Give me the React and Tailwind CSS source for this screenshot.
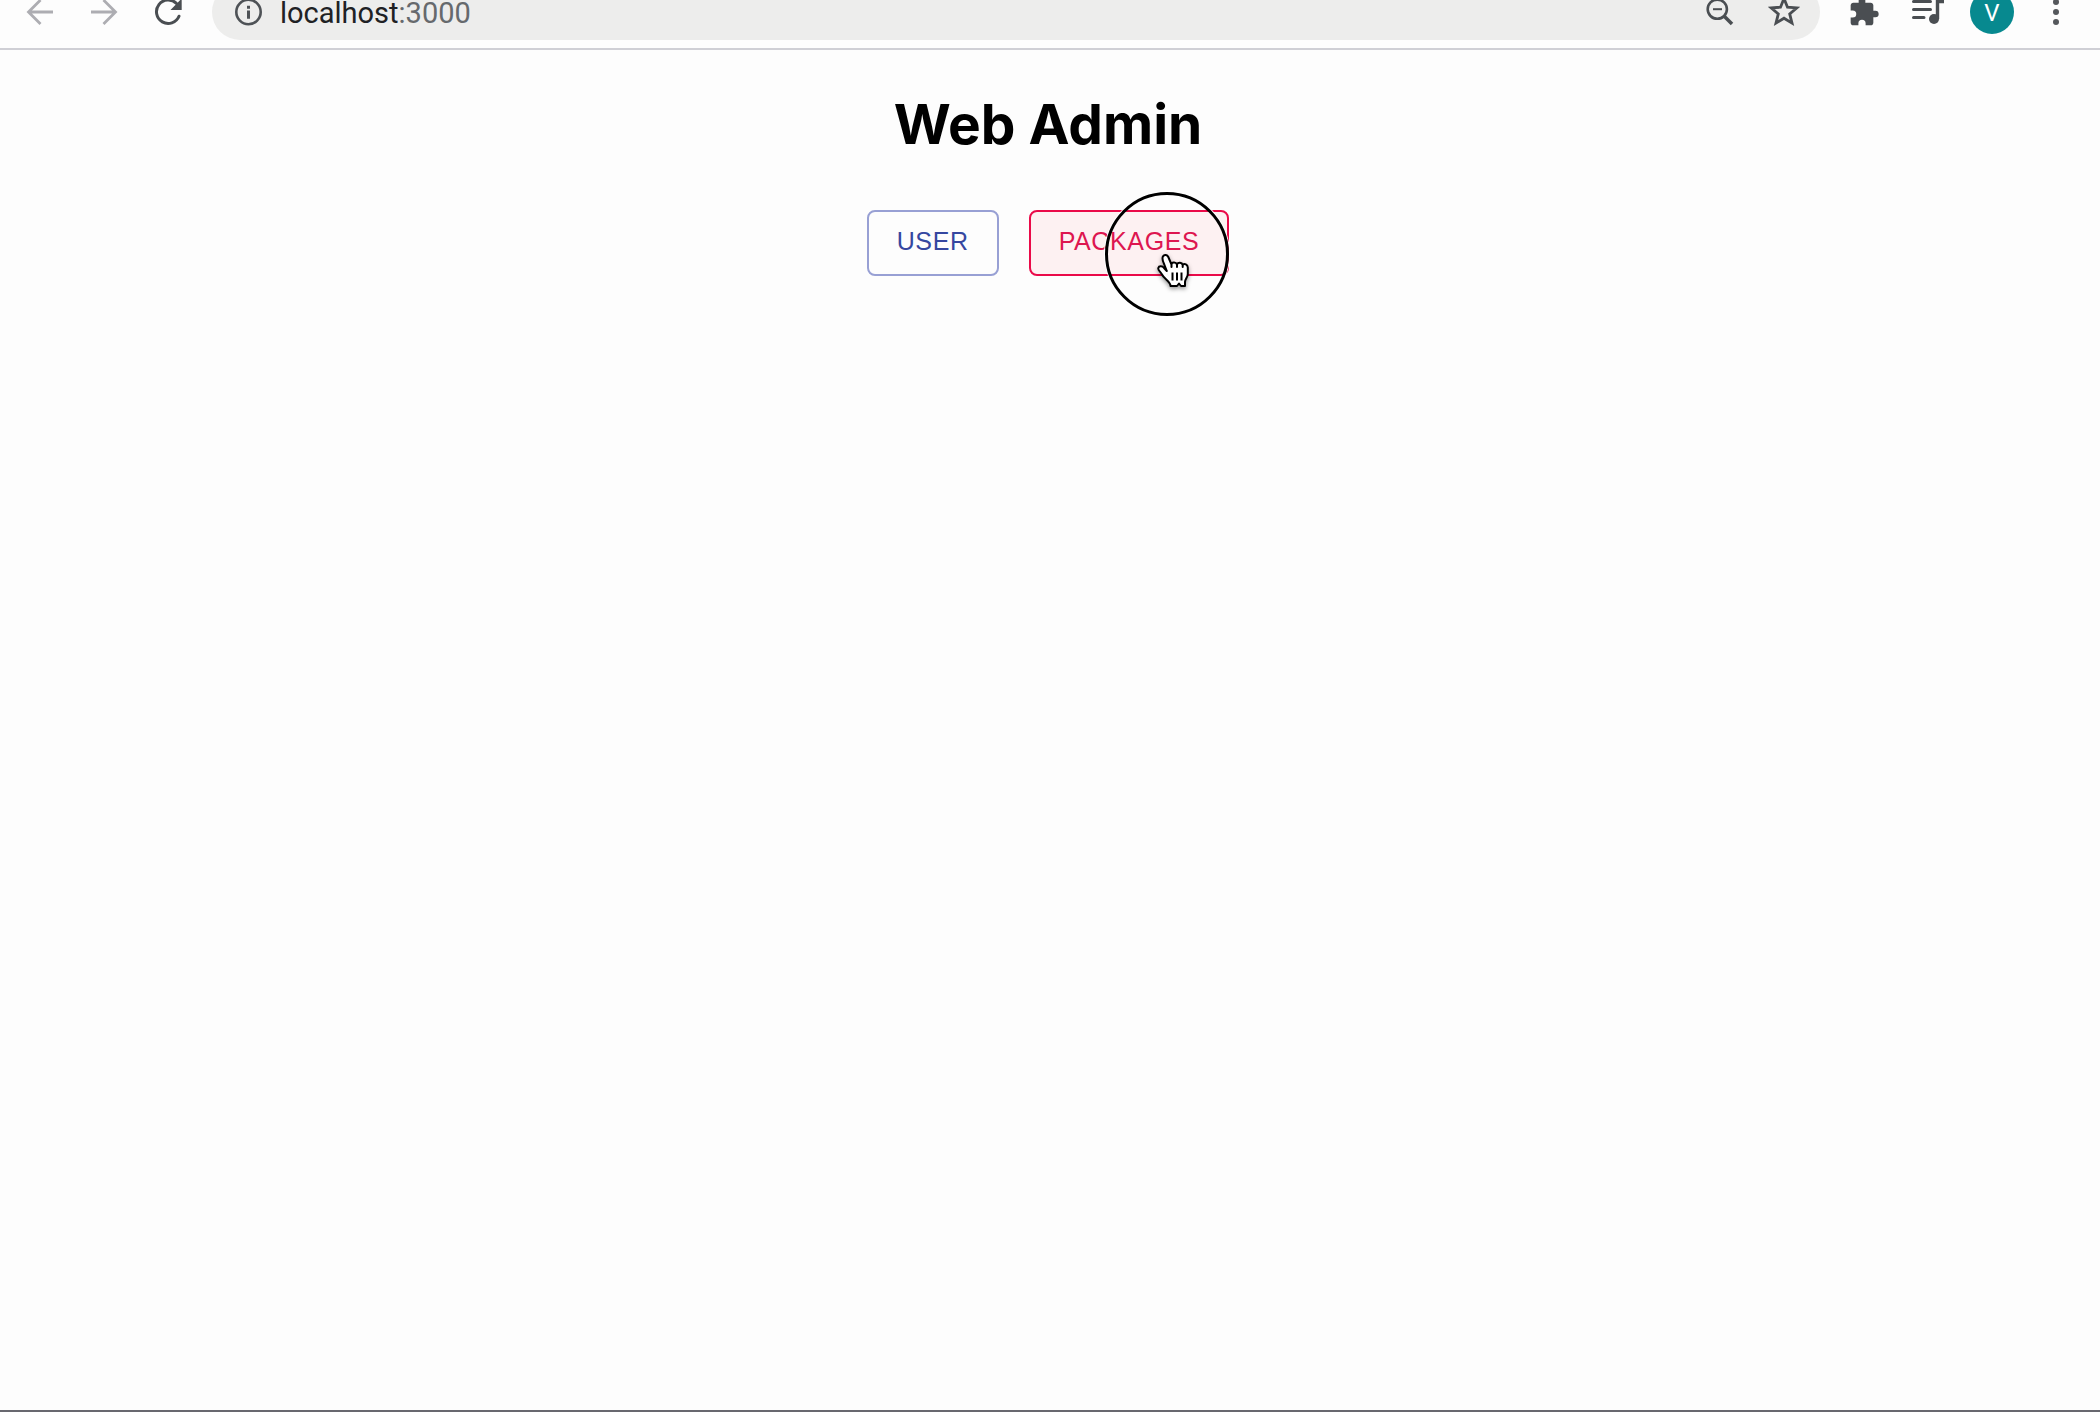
import React from "react";

const iconButton = "flex size-10 shrink-0 items-center justify-center";

function ArrowIcon({ className }) {
  return (
    <svg viewBox="0 0 32 32" className={className} fill="none" stroke="currentColor" strokeWidth="2.8" aria-hidden="true">
      <path d="M29 16H5M16.500 4 4.500 16l12 12" />
    </svg>
  );
}

function ReloadIcon() {
  return (
    <svg viewBox="0 0 32 32" className="size-8 text-[#4a4e52]" aria-hidden="true">
      <path d="M27 20.200A11.700 11.700 0 1 1 24.500 7.500" fill="none" stroke="currentColor" strokeWidth="3" strokeLinecap="round" />
      <path d="M29.700 2.500V14H18.500z" fill="currentColor" />
    </svg>
  );
}

function InfoIcon() {
  return (
    <svg viewBox="0 0 32 32" className="size-8 shrink-0 text-[#4e5256]" aria-hidden="true">
      <circle cx="16.500" cy="16" r="12.200" fill="none" stroke="currentColor" strokeWidth="2.600" />
      <path d="M15 9.800h3v3h-3zM15 14.600h3v8.200h-3z" fill="currentColor" />
    </svg>
  );
}

function ZoomOutIcon() {
  return (
    <svg viewBox="0 0 32 32" className="size-8 text-[#4a4e52]" fill="none" stroke="currentColor" aria-hidden="true">
      <circle cx="13.300" cy="13.200" r="9.600" strokeWidth="2.600" />
      <path d="M9 13.200h9" strokeWidth="2" />
      <path d="m20 20 8 8" strokeWidth="3.600" />
    </svg>
  );
}

function StarIcon() {
  return (
    <svg viewBox="0 0 32 32" className="size-8 text-[#4a4e52]" fill="none" stroke="currentColor" strokeWidth="2.800" aria-hidden="true">
      <path d="m16 2.500 3.500 8.700 9.300.700-7.100 6 2.300 9.200L16 22.200l-8 4.900 2.300-9.200-7.100-6 9.300-.700z" />
    </svg>
  );
}

function PuzzleIcon() {
  return (
    <svg viewBox="0 0 24 24" className="size-8 text-[#4a4e52]" fill="currentColor" aria-hidden="true">
      <path d="M20.500 11H19V7c0-1.100-.9-2-2-2h-4V3.500a2.500 2.500 0 0 0-5 0V5H4c-1.100 0-2 .9-2 2v3.800h1.500a2.700 2.700 0 0 1 0 5.400H2V20c0 1.100.9 2 2 2h3.800v-1.500a2.700 2.700 0 0 1 5.400 0V22H17c1.100 0 2-.9 2-2v-4h1.500a2.500 2.500 0 0 0 0-5z" />
    </svg>
  );
}

function PlaylistIcon() {
  return (
    <svg viewBox="0 0 36 32" className="h-8 w-9 text-[#4a4e52]" fill="none" stroke="currentColor" aria-hidden="true">
      <path d="M3.500 5.500h17M3.500 13.500h17M3.500 21.500h10.500" strokeWidth="3" strokeLinecap="round" />
      <path d="M27.500 23V5.500H34" strokeWidth="3.400" />
      <circle cx="24" cy="23" r="5" fill="currentColor" stroke="none" />
    </svg>
  );
}

function DotsIcon() {
  return (
    <svg viewBox="0 0 32 32" className="size-8 text-[#55585c]" fill="currentColor" aria-hidden="true">
      <circle cx="16" cy="6" r="3" />
      <circle cx="16" cy="16" r="3" />
      <circle cx="16" cy="26" r="3" />
    </svg>
  );
}

function HandPointer() {
  return (
    <svg viewBox="0 0 36 40" className="absolute top-[42px] right-9 h-10 w-9 drop-shadow-[0_2px_2px_rgba(0,0,0,0.4)]" aria-hidden="true">
      <path
        d="M11.500 24.500 8.200 14.500 C5.800 9.500 4.500 6.500 6 4.300 C7.500 2.200 10.300 2.800 11.300 5 L14.500 12.500 C14.600 10.300 18.800 9.600 20 12.500 C21 10 25 10.200 25.700 13 C27.500 11 30.700 12.500 30.800 15.500 V22 C30.800 25.500 28 27 28 30 V34 H24 L22 31.500 20 34 H13.500 C13.500 29.500 7 27 5 22.500 C3.500 19.500 .800 18.500 1.300 16 C2 13.500 5.500 14 7 16 L9.500 18.800"
        fill="#ffffff"
        stroke="none"
      />
      <path
        d="M9.800 19 L7 16 C5.500 14 2 13.500 1.300 16 C.800 18.500 3.500 19.500 5 22.500 C7 27 13.500 29.500 13.500 34 H20 L22 31.500 24 34 H28 V30 C28 27 30.800 25.500 30.800 22 V15.500 C30.700 12.500 27.500 11 25.700 13 V15 M25.700 13 C25 10.200 21 10 20 12.500 V15 M20 12.500 C18.800 9.600 14.600 10.300 14.500 12.500 V15 M14.500 12.500 L11.300 5 C10.300 2.800 7.500 2.200 6 4.300 C4.800 6.500 5.800 9.500 7.300 12.500 L9.800 19"
        fill="none"
        stroke="#000000"
        strokeWidth="2"
        strokeLinejoin="round"
        strokeLinecap="round"
      />
      <path d="M15.500 20.500v8M20 20.500v8M24.500 20.500v8" fill="none" stroke="#000000" strokeWidth="2" />
    </svg>
  );
}

function BrowserBar() {
  return (
    <header className="flex h-[50px] items-end overflow-hidden border-b-2 border-[#cfcfd5] pb-2">
      <div className="flex h-14 min-w-0 flex-1 items-center pr-6 pl-5">
        <nav className="flex gap-6 pr-6">
          <button type="button" aria-label="Back" className={iconButton}>
            <ArrowIcon className="size-8 text-[#adadb2]" />
          </button>
          <button type="button" aria-label="Forward" className={iconButton}>
            <ArrowIcon className="size-8 rotate-180 text-[#adadb2]" />
          </button>
          <button type="button" aria-label="Reload" className={iconButton}>
            <ReloadIcon />
          </button>
        </nav>
        <div className="flex h-14 min-w-0 flex-1 items-center rounded-full bg-[#ededec] pr-4 pl-5">
          <InfoIcon />
          <a href="#" aria-label="localhost:3000" className="min-w-0 flex-1 pt-0.5 pl-4 font-[Roboto,sans-serif] text-[29px] leading-8 text-[#202124]">
            localhost<span className="text-[#66696d]">:3000</span>
          </a>
          <div className="flex gap-6">
            <button type="button" aria-label="Zoom" className={iconButton}>
              <ZoomOutIcon />
            </button>
            <button type="button" aria-label="Bookmark" className={iconButton}>
              <StarIcon />
            </button>
          </div>
        </div>
        <div className="flex items-center gap-6 pl-6">
          <button type="button" aria-label="Extensions" className={iconButton}>
            <PuzzleIcon />
          </button>
          <button type="button" aria-label="Media" className={iconButton}>
            <PlaylistIcon />
          </button>
          <button type="button" aria-label="Profile" className="-mx-0.5 flex size-11 shrink-0 items-center justify-center rounded-full bg-[#07898f] pt-0.5 font-[Roboto,sans-serif] text-2xl leading-6 text-white">
            V
          </button>
          <button type="button" aria-label="Menu" className={iconButton}>
            <DotsIcon />
          </button>
        </div>
      </div>
    </header>
  );
}

const actionButton =
  "h-[66px] rounded-lg border-2 px-7 pb-1 font-['Liberation_Sans',Arial,sans-serif] text-[25px] leading-10 tracking-wide";

export default function App() {
  return (
    <div className="flex min-h-screen flex-col border-b-2 border-[#68686f] bg-[#fdfdfd]">
      <BrowserBar />
      <main className="flex flex-1 flex-col items-center pt-10">
        <h1 className="pr-1 font-[Inter,sans-serif] text-[55px] leading-[68px] font-bold text-black">Web Admin</h1>
        <div className="mt-[52px] flex gap-[30px] pr-1">
          <button type="button" className={`${actionButton} border-[#98a0d4] text-[#3547a0]`}>
            USER
          </button>
          <div className="relative">
            <button type="button" className={`${actionButton} border-[#ea0a49] bg-[#fdf1f2] text-[#dd1650]`}>
              PACKAGES
            </button>
            <div className="pointer-events-none absolute -top-[18px] right-0 size-[124px] rounded-full border-[3px] border-black ring-1 ring-white" />
            <HandPointer />
          </div>
        </div>
      </main>
    </div>
  );
}
